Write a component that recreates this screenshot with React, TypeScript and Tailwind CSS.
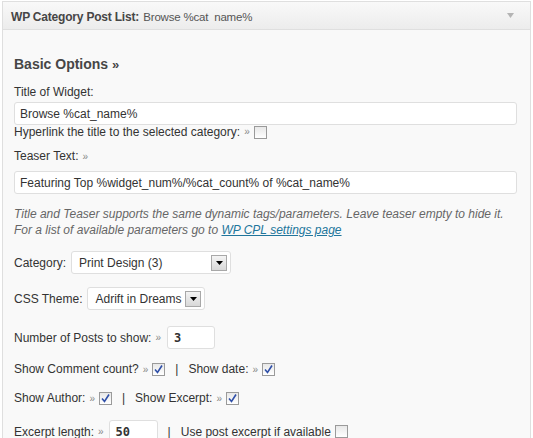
import React from "react";

const Raquo = () => <span className="text-[#888] text-[10px] ml-[4px] mr-[4px]">»</span>;

const Checkbox = ({ checked }: { checked?: boolean }) => (
  <span className="inline-flex items-center justify-center w-[13px] h-[13px] border border-[#9a9a9a] bg-gradient-to-b from-[#e8e8e8] to-white align-middle">
    {checked && (
      <svg width="9" height="9" viewBox="0 0 9 9">
        <path d="M1 4.5 L3.5 7.5 L8 0.5" stroke="#2f4fa8" strokeWidth="1.6" fill="none" />
      </svg>
    )}
  </span>
);

const Select = ({ value, width }: { value: string; width: string }) => (
  <span
    className={`inline-flex items-center justify-between h-[23px] ${width} bg-white border border-[#dfdfdf] rounded-[3px] pl-[7px] pr-[3px] text-[12px] text-[#333]`}
  >
    <span>{value}</span>
    <span className="flex items-center justify-center w-[16px] h-[16px] border border-[#a8a8a8] bg-gradient-to-b from-[#f4f4f4] to-[#d8d8d8]">
      <svg width="7" height="4" viewBox="0 0 7 4">
        <path d="M0 0 H7 L3.5 4 Z" fill="#000" />
      </svg>
    </span>
  </span>
);

const SmallInput = ({ value, width }: { value: string; width: string }) => (
  <span
    className={`inline-flex items-center h-[23px] ${width} bg-white border border-[#dfdfdf] rounded-[3px] px-[6px] text-[12px] text-[#333] font-bold`}
    style={{ fontFamily: '"DejaVu Sans Mono", monospace' }}
  >
    {value}
  </span>
);

const Sep = () => <span className="mx-[10px] text-[#333]">|</span>;

export default function App() {
  return (
    <div
      className="w-[533px] h-[438px] bg-white overflow-hidden pt-[1px] pl-[2px]"
      style={{ fontFamily: '"Liberation Sans", Arial, sans-serif' }}
    >
      <div className="w-[529px] h-[460px] border border-[#dfdfdf] bg-[#f9f9f9]">
        <div className="flex items-center justify-between h-[28px] border-b border-[#dfdfdf] bg-gradient-to-b from-[#f9f9f9] to-[#ececec] pl-[8px] pr-[16px]">
          <div className="tracking-[-0.2px]">
            <span className="font-bold text-[12px] text-[#464646]">WP Category Post List:</span>{" "}
            <span className="text-[11.5px] text-[#555]">Browse %cat&nbsp;&nbsp;name%</span>
          </div>
          <svg width="7" height="5" viewBox="0 0 7 5">
            <path d="M0 0 H7 L3.5 5 Z" fill="#b4b4b4" />
          </svg>
        </div>

        <div className="pl-[11px] pr-[13px] text-[12px] text-[#333]">
          <div className="mt-[25px] text-[14px] font-bold text-[#464646] leading-[18px]">
            Basic Options <span className="text-[13px]">»</span>
          </div>

          <div className="mt-[11px] leading-[14px]">Title of Widget:</div>
          <div className="mt-[3px] flex items-center h-[23px] bg-white border border-[#dfdfdf] rounded-[3px] px-[5px] text-[12px]">
            Browse %cat_name%
          </div>
          <div className="mt-0 flex items-center leading-[14px]">
            Hyperlink the title to the selected category:
            <Raquo />
            <Checkbox />
          </div>

          <div className="mt-[10px] leading-[14px]">
            Teaser Text:
            <Raquo />
          </div>
          <div className="mt-[7px] flex items-center h-[23px] bg-white border border-[#dfdfdf] rounded-[3px] px-[5px] text-[12px]">
            Featuring Top %widget_num%/%cat_count% of %cat_name%
          </div>

          <div className="mt-[12px] italic text-[#666] leading-[16px]">
            Title and Teaser supports the same dynamic tags/parameters. Leave teaser empty to hide it.
            <br />
            For a list of available parameters go to{" "}
            <a className="text-[#21759b] underline">WP CPL settings page</a>
          </div>

          <div className="mt-[13px] flex items-center gap-[5px]">
            <span>Category:</span>
            <Select value="Print Design (3)" width="w-[160px]" />
          </div>

          <div className="mt-[13px] flex items-center gap-[5px]">
            <span>CSS Theme:</span>
            <Select value="Adrift in Dreams" width="w-[118px]" />
          </div>

          <div className="mt-[16px] flex items-center">
            <span>Number of Posts to show:</span>
            <Raquo />
            <span className="ml-[2px] flex">
              <SmallInput value="3" width="w-[48px]" />
            </span>
          </div>

          <div className="mt-[11px] flex items-center">
            <span>Show Comment count?</span>
            <Raquo />
            <Checkbox checked />
            <Sep />
            <span>Show date:</span>
            <Raquo />
            <Checkbox checked />
          </div>

          <div className="mt-[11px] flex items-center">
            <span>Show Author:</span>
            <Raquo />
            <Checkbox checked />
            <Sep />
            <span>Show Excerpt:</span>
            <Raquo />
            <Checkbox checked />
          </div>

          <div className="mt-[13px] flex items-center">
            <span>Excerpt length:</span>
            <Raquo />
            <span className="ml-[1px] flex">
              <SmallInput value="50" width="w-[49px]" />
            </span>
            <Sep />
            <span>Use post excerpt if available</span>
            <span className="ml-[4px] flex">
              <Checkbox />
            </span>
          </div>
        </div>
      </div>
    </div>
  );
}
